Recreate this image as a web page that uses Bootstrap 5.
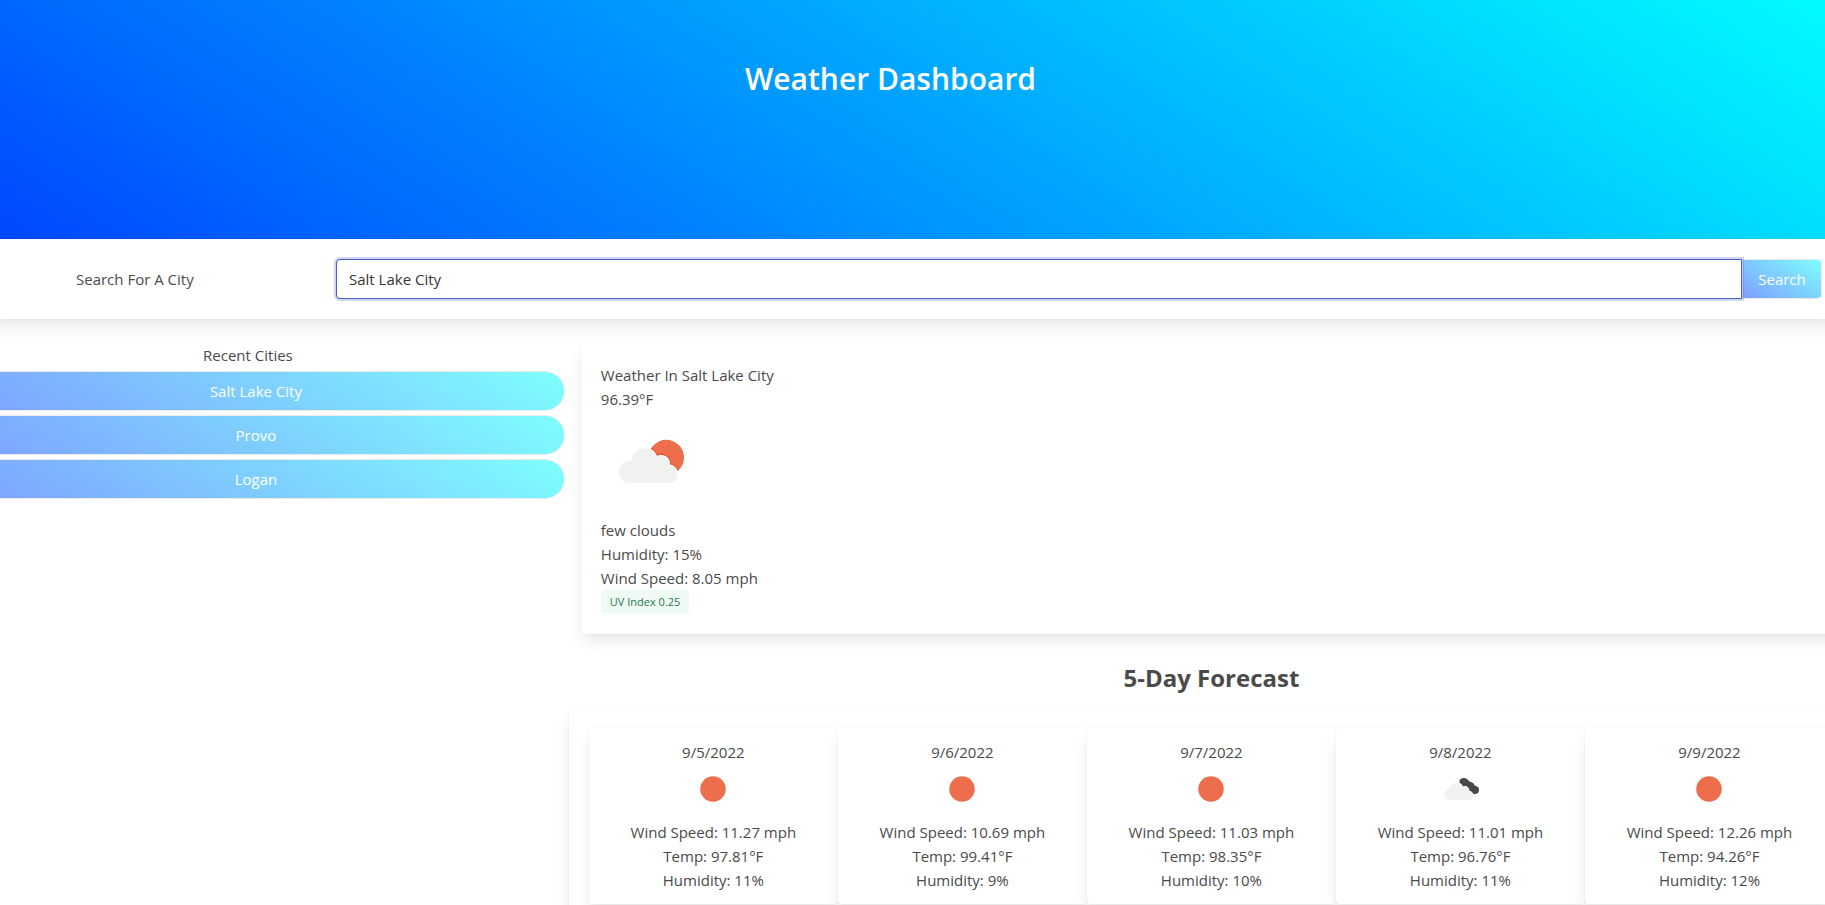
<!DOCTYPE html>
<html lang="en">
<head>
<meta charset="utf-8">
<meta name="viewport" content="width=device-width, initial-scale=1">
<title>Weather Dashboard</title>
<link rel="stylesheet" href="https://cdn.jsdelivr.net/npm/bootstrap@5.3.0/dist/css/bootstrap.min.css">
<style>
  :root { --lift: 0 8px 16px -2px rgba(10,10,10,.1), 0 0 0 1px rgba(10,10,10,.02); --sky: linear-gradient(33deg, #0048ff, #00fbff); }
  body { font: 15px/24px "Open Sans", "Noto Sans", sans-serif; color: #4a4a4a; background: #fff; }
  .page { overflow-x: hidden; }
  .hero { background: var(--sky); height: 239px; padding: 56px 44px 0 0; }
  .hero h1 { font-size: 30px; line-height: 45px; font-weight: 600; }
  .searchbar { margin: 0 -12px; padding: 20px 15px 20px 12px; box-shadow: var(--lift); }
  .searchbar label { width: 336px; padding-left: 76px; }
  .searchbar .form-control { height: 40px; padding: 0 12px; font-size: 15px; color: #363636; border-color: #dbdbdb; border-radius: 4px 0 0 4px; transition: none; }
  .searchbar .form-control:focus { border-color: #485fc7; box-shadow: 0 0 0 2px rgba(72,95,199,.25); }
  .btn-sky { height: 40px; padding: 0 15px; font-size: 15px; color: #fff; border: 1px solid #dbdbdb; background: linear-gradient(33deg, #0040ff, #00ffff); opacity: .5; }
  .btn-sky:hover { color: #fff; opacity: .7; }
  .btn-search { width: 80px; flex-shrink: 0; border-radius: 0 4px 4px 0; }
  .recent { width: 30.95%; padding-top: 24px; }
  .recent h2 { font-size: 15px; line-height: 24px; padding-right: 69px; margin-bottom: 4px; }
  .recent .btn-sky { border-radius: 20px; margin-left: -53px; }
  .results { margin: 24px -29px 24px 4px; }
  .panel { background: #fff; border-radius: 6px; padding: 20px; box-shadow: var(--lift); }
  .current { margin: 0 12px 24px; }
  .current svg { margin-bottom: 7px; }
  .uv { height: 24px; padding: 0 9px; font-size: 11px; border-radius: 4px; color: #257953; background: #effaf5; }
  .results h2 { font-size: 24px; line-height: 40px; font-weight: 700; margin-bottom: 10px; }
  .day { border-radius: 4px; padding: 12px; box-shadow: var(--lift); background: #fff; }
  .day svg { margin-bottom: 6px; }
</style>
</head>
<body>
<svg class="position-absolute" width="0" height="0" aria-hidden="true">
  <defs>
    <clipPath id="sun-clip"><circle cx="65.300" cy="46.500" r="17.700"/></clipPath>
    <path id="cloud" d="M29 72a11 11 0 0 1 0-22.500l1.600.1A12.700 12.700 0 0 1 55.500 46.500 7.700 7.700 0 0 1 67.800 54.300 9 9 0 0 1 69.500 72z"/>
    <symbol id="few-clouds" viewBox="0 0 100 100">
      <circle cx="65.300" cy="46.500" r="17.700" fill="#ec6e4c"/>
      <g clip-path="url(#sun-clip)"><use href="#cloud" fill="#e8502a" stroke="#e8502a" stroke-width="4"/></g>
      <use href="#cloud" fill="#fff" stroke="#fff" stroke-width="2"/>
      <use href="#cloud" fill="#f1f1f0"/>
    </symbol>
    <symbol id="clear" viewBox="0 0 100 100"><circle cx="50" cy="50" r="25.500" fill="#ec6e4c"/></symbol>
    <symbol id="broken-clouds" viewBox="0 0 100 100">
      <g fill="#484848"><circle cx="57.500" cy="37" r="9"/><circle cx="70" cy="45" r="9"/><circle cx="80" cy="52" r="8"/><path d="M50 40l26 20 10-12-24-19z"/></g>
      <use href="#cloud" fill="#fff" stroke="#fff" stroke-width="2"/>
      <use href="#cloud" fill="#f2f2f2"/>
    </symbol>
  </defs>
</svg>
<div class="page">
  <header class="hero text-center text-white"><h1 class="m-0">Weather Dashboard</h1></header>
  <form class="searchbar d-flex align-items-center bg-white position-relative" onsubmit="return false">
    <label for="city" class="flex-shrink-0">Search For A City</label>
    <input id="city" type="text" class="form-control position-relative z-1" value="Salt Lake City" autocomplete="off" spellcheck="false" autofocus>
    <button type="submit" class="btn btn-sky btn-search">Search</button>
  </form>
  <div class="d-flex">
    <aside class="recent flex-shrink-0">
      <h2 class="text-center fw-normal">Recent Cities</h2>
      <div class="d-grid gap-1">
        <button type="button" class="btn btn-sky">Salt Lake City</button>
        <button type="button" class="btn btn-sky">Provo</button>
        <button type="button" class="btn btn-sky">Logan</button>
      </div>
    </aside>
    <main class="results flex-grow-1">
      <section class="panel current">
        <div>Weather In Salt Lake City</div>
        <div>96.39°F</div>
        <svg class="d-block" width="100" height="100" role="img" aria-label="few clouds"><use href="#few-clouds"/></svg>
        <div>few clouds</div>
        <div>Humidity: 15%</div>
        <div>Wind Speed: 8.05 mph</div>
        <div class="d-flex"><span class="uv">UV Index 0.25</span></div>
      </section>
      <h2 class="text-center">5-Day Forecast</h2>
      <section class="panel row row-cols-5 g-0 m-0 text-center">
        <div class="col day"><div>9/5/2022</div><svg width="50" height="50" class="d-block mx-auto" aria-hidden="true"><use href="#clear"/></svg><div>Wind Speed: 11.27 mph</div><div>Temp: 97.81°F</div><div>Humidity: 11%</div></div>
        <div class="col day"><div>9/6/2022</div><svg width="50" height="50" class="d-block mx-auto" aria-hidden="true"><use href="#clear"/></svg><div>Wind Speed: 10.69 mph</div><div>Temp: 99.41°F</div><div>Humidity: 9%</div></div>
        <div class="col day"><div>9/7/2022</div><svg width="50" height="50" class="d-block mx-auto" aria-hidden="true"><use href="#clear"/></svg><div>Wind Speed: 11.03 mph</div><div>Temp: 98.35°F</div><div>Humidity: 10%</div></div>
        <div class="col day"><div>9/8/2022</div><svg width="50" height="50" class="d-block mx-auto" aria-hidden="true"><use href="#broken-clouds"/></svg><div>Wind Speed: 11.01 mph</div><div>Temp: 96.76°F</div><div>Humidity: 11%</div></div>
        <div class="col day"><div>9/9/2022</div><svg width="50" height="50" class="d-block mx-auto" aria-hidden="true"><use href="#clear"/></svg><div>Wind Speed: 12.26 mph</div><div>Temp: 94.26°F</div><div>Humidity: 12%</div></div>
      </section>
    </main>
  </div>
</div>
<script src="https://cdn.jsdelivr.net/npm/bootstrap@5.3.0/dist/js/bootstrap.bundle.min.js"></script>
<script>
  const city = document.getElementById('city');
  city.focus({ preventScroll: true });
  city.setSelectionRange(city.value.length, city.value.length);
</script>
</body>
</html>
